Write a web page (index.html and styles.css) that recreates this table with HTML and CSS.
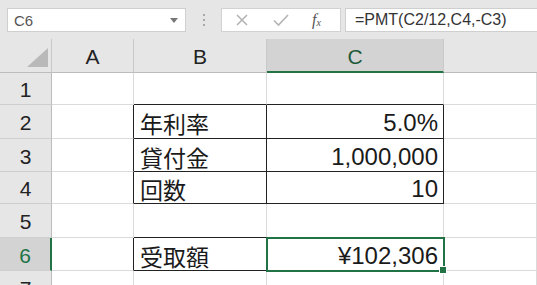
FILE: index.html
```html
<!DOCTYPE html>
<html lang="ja">
<head>
<meta charset="utf-8">
<link rel="stylesheet" href="styles.css">
</head>
<body>
<div class="toolbar">
  <div class="namebox"><span>C6</span><span class="caret"></span></div>
  <div class="dots"><i></i><i></i><i></i></div>
  <div class="btns">
    <svg class="ico" width="16" height="16" viewBox="0 0 16 16"><path d="M3 3L13 13M13 3L3 13" stroke="#b4b4b4" stroke-width="1.6" fill="none"/></svg>
    <svg class="ico" width="18" height="16" viewBox="0 0 18 16"><path d="M2 8.5L6.5 13L16 3" stroke="#b4b4b4" stroke-width="1.6" fill="none"/></svg>
    <span class="fx">f<sub>x</sub></span>
  </div>
  <div class="formula">=PMT(C2/12,C4,-C3)</div>
</div>
<div class="sheet">
  <div class="ch corner"><svg width="21" height="19" viewBox="0 0 21 19"><path d="M21 0L21 19L0 19Z" fill="#b9b9b9"/></svg></div>
  <div class="ch">A</div>
  <div class="ch">B</div>
  <div class="ch sel">C</div>
  <div class="ch last"></div>

  <div class="rh">1</div><div class="c"></div><div class="c bb-k"></div><div class="c bb-k"></div><div class="c"></div>
  <div class="rh">2</div><div class="c br-k"></div><div class="c k jp">年利率</div><div class="c k num">5.0%</div><div class="c"></div>
  <div class="rh">3</div><div class="c br-k"></div><div class="c k jp">貸付金</div><div class="c k num">1,000,000</div><div class="c"></div>
  <div class="rh">4</div><div class="c br-k"></div><div class="c k jp">回数</div><div class="c k num">10</div><div class="c"></div>
  <div class="rh">5</div><div class="c"></div><div class="c bb-k"></div><div class="c"></div><div class="c"></div>
  <div class="rh rsel">6</div><div class="c br-k"></div><div class="c k jp">受取額</div><div class="c num active">¥102,306</div><div class="c"></div>
  <div class="rh">7</div><div class="c"></div><div class="c"></div><div class="c"></div><div class="c"></div>
</div>
</body>
</html>
```
FILE: styles.css
```css
html, body { margin: 0; padding: 0; }
body {
  width: 537px;
  height: 285px;
  overflow: hidden;
  background: #e6e6e6;
  font-family: "Liberation Sans", Arial, sans-serif;
  color: #222;
}
.toolbar {
  height: 39px;
  box-sizing: border-box;
  padding: 8px 0 0 7px;
  display: flex;
  align-items: flex-start;
  background: #e6e6e6;
}
.namebox {
  width: 179px;
  height: 24px;
  box-sizing: border-box;
  background: #fff;
  border: 1px solid #cfcfcf;
  display: flex;
  align-items: center;
  justify-content: space-between;
  padding: 0 7px 0 6px;
  font-size: 15px;
  color: #555;
}
.caret {
  width: 0; height: 0;
  border-left: 4px solid transparent;
  border-right: 4px solid transparent;
  border-top: 5px solid #777;
}
.dots {
  width: 35px;
  height: 24px;
  display: flex;
  flex-direction: column;
  align-items: center;
  justify-content: center;
  gap: 3px;
}
.dots i {
  width: 2px; height: 2px;
  background: #a8a8a8;
  display: block;
}
.btns {
  width: 120px;
  height: 24px;
  box-sizing: border-box;
  background: #fff;
  border: 1px solid #d2d2d2;
  display: flex;
  align-items: center;
  padding-left: 12px;
  gap: 22px;
}
.fx {
  font-family: "Liberation Serif", serif;
  font-style: italic;
  font-size: 16px;
  color: #555;
  margin-left: 0;
}
.fx sub { font-size: 10px; vertical-align: -1px; }
.formula {
  margin-left: 4px;
  flex: 1;
  height: 24px;
  box-sizing: border-box;
  background: #fff;
  border: 1px solid #cfcfcf;
  border-right: none;
  display: flex;
  align-items: center;
  padding-left: 9px;
  font-size: 16px;
  color: #333;
}
.sheet {
  display: grid;
  grid-template-columns: 52px 82px 133px 177px 1fr;
  grid-template-rows: 34px 32px 34px 33px 32px 34px 33px 33px;
  background: #fff;
}
.ch {
  background: #e6e6e6;
  border-right: 1px solid #c9c9c9;
  border-bottom: 1px solid #bcbcbc;
  display: flex;
  align-items: center;
  justify-content: center;
  font-size: 21px;
  color: #222;
  padding-top: 3px;
  box-sizing: border-box;
}
.ch.corner {
  justify-content: flex-end;
  align-items: flex-end;
  padding: 0 3px 5px 0;
}
.ch.last { border-right: none; }
.ch.sel {
  background: #d3d3d3;
  color: #1e5a3a;
  border-bottom: 2px solid #217346;
}
.rh {
  background: #e6e6e6;
  border-right: 1px solid #bcbcbc;
  border-bottom: 1px solid #cfcfcf;
  display: flex;
  align-items: center;
  justify-content: center;
  font-size: 21px;
  color: #222;
  padding-top: 3px;
  box-sizing: border-box;
}
.rh.rsel {
  background: #d3d3d3;
  color: #217346;
  border-right: 2px solid #217346;
}
.c {
  border-right: 1px solid #dadada;
  border-bottom: 1px solid #dadada;
  box-sizing: border-box;
  display: flex;
  align-items: center;
  padding: 3px 5px 0 6px;
  font-size: 24px;
  white-space: nowrap;
  color: #1a1a1a;
}
.c.k { border-right-color: #222; border-bottom-color: #222; }
.c.br-k { border-right-color: #222; }
.c.bb-k { border-bottom-color: #222; }
.jp { font-family: "Noto Sans CJK JP", "Liberation Sans", sans-serif; font-size: 23px; }
.num { justify-content: flex-end; }
.active {
  position: relative;
  outline: 2px solid #217346;
  outline-offset: -1px;
  z-index: 1;
}
.active::after {
  content: "";
  position: absolute;
  right: -4px;
  bottom: -4px;
  width: 6px;
  height: 6px;
  background: #217346;
  border: 1px solid #fff;
}
```
